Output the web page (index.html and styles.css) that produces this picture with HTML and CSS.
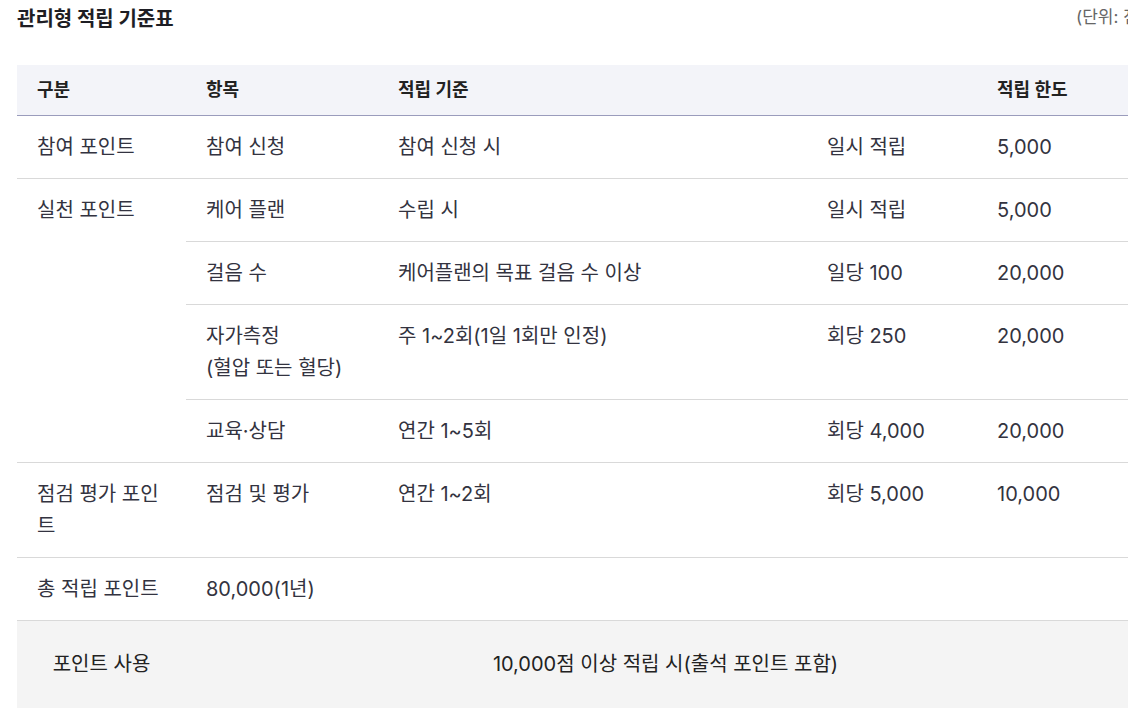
FILE: index.html
```html
<!DOCTYPE html>
<html lang="ko">
<head>
<meta charset="utf-8">
<title>관리형 적립 기준표</title>
<link rel="stylesheet" href="styles.css">
</head>
<body>
<div class="page">
  <div class="title-row">
    <h2 class="title">관리형 적립 기준표</h2>
    <span class="unit">(단위: 점)</span>
  </div>
  <table class="points">
    <colgroup>
      <col class="c1"><col class="c2"><col class="c3"><col class="c4"><col class="c5">
    </colgroup>
    <thead>
      <tr>
        <th>구분</th>
        <th>항목</th>
        <th colspan="2">적립 기준</th>
        <th>적립 한도</th>
      </tr>
    </thead>
    <tbody>
      <tr>
        <td>참여 포인트</td>
        <td>참여 신청</td>
        <td>참여 신청 시</td>
        <td>일시 적립</td>
        <td>5,000</td>
      </tr>
      <tr>
        <td rowspan="4">실천 포인트</td>
        <td>케어 플랜</td>
        <td>수립 시</td>
        <td>일시 적립</td>
        <td>5,000</td>
      </tr>
      <tr>
        <td>걸음 수</td>
        <td>케어플랜의 목표 걸음 수 이상</td>
        <td>일당 100</td>
        <td>20,000</td>
      </tr>
      <tr>
        <td>자가측정<br>(혈압 또는 혈당)</td>
        <td>주 1~2회(1일 1회만 인정)</td>
        <td>회당 250</td>
        <td>20,000</td>
      </tr>
      <tr>
        <td>교육·상담</td>
        <td>연간 1~5회</td>
        <td>회당 4,000</td>
        <td>20,000</td>
      </tr>
      <tr>
        <td>점검 평가 포인트</td>
        <td>점검 및 평가</td>
        <td>연간 1~2회</td>
        <td>회당 5,000</td>
        <td>10,000</td>
      </tr>
      <tr>
        <td>총 적립 포인트</td>
        <td colspan="4">80,000(1년)</td>
      </tr>
      <tr class="use-row">
        <td class="center">포인트 사용</td>
        <td colspan="4" class="center">10,000점 이상 적립 시(출석 포인트 포함)</td>
      </tr>
    </tbody>
  </table>
</div>
</body>
</html>
```

FILE: styles.css
```css
html, body {
  margin: 0;
  padding: 0;
  overflow: hidden;
  background: #ffffff;
}

body {
  font-family: Inter, "Noto Sans CJK KR", sans-serif;
  color: #333340;
}

.page {
  padding: 0 17px;
  width: 1128px;
}

.title-row {
  display: flex;
  justify-content: space-between;
  align-items: flex-start;
  height: 65px;
}

.title {
  margin: 5px 0 0;
  font-size: 20px;
  line-height: 28px;
  font-weight: 700;
  color: #1e1e24;
}

.unit {
  margin-top: 3px;
  font-size: 17px;
  line-height: 28px;
  color: #666;
}

.points {
  width: 1128px;
  border-collapse: collapse;
  table-layout: fixed;
  font-size: 20px;
  line-height: 32px;
}

.c1 { width: 169px; }
.c2 { width: 192px; }
.c3 { width: 429px; }
.c4 { width: 170px; }
.c5 { width: 168px; }

.points th {
  background: #f3f4f9;
  border-bottom: 1px solid #9a9cbc;
  height: 50px;
  padding: 0 20px;
  box-sizing: border-box;
  text-align: left;
  font-size: 18px;
  font-weight: 700;
  color: #222;
}

.points td {
  padding: 15px 20px;
  vertical-align: top;
  text-align: left;
  border-bottom: 1px solid #d9d9d9;
}

.points .use-row td {
  background: #f4f4f4;
  border-top: 1px solid #e2e2e2;
  border-bottom: none;
  height: 88px;
  box-sizing: border-box;
  vertical-align: middle;
  padding: 0 20px;
  color: #222;
}

.points td.center {
  text-align: center;
}
```
